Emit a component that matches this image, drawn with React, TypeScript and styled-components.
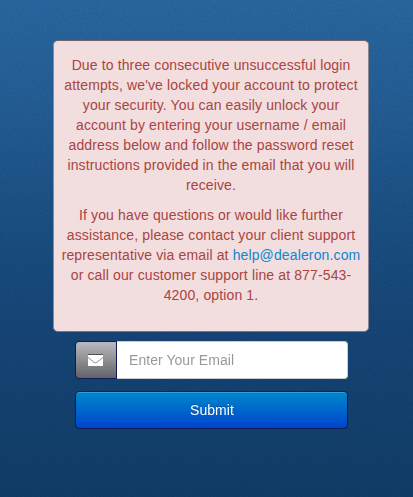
import React from "react";
import styled, { createGlobalStyle } from "styled-components";

const GlobalStyle = createGlobalStyle`
  * { box-sizing: border-box; }
  html, body { margin: 0; padding: 0; }
  body {
    font-family: "Liberation Sans", Arial, Helvetica, sans-serif;
    font-size: 14px;
    line-height: 20px;
  }
`;

const Page = styled.main`
  position: relative;
  isolation: isolate;
  display: flex;
  flex-direction: column;
  height: 497px;
  padding: 40px 44px 0 53px;
  overflow: hidden;
  background: linear-gradient(#27649b 0, #225a90 110px, #1a4e81 210px, #144272 340px, #103b64 497px);
`;

const Grain = styled.svg`
  position: absolute;
  inset: 0;
  z-index: -1;
  width: 100%;
  height: 100%;
  opacity: 0.09;
  mix-blend-mode: overlay;
`;

const Alert = styled.section`
  height: 292px;
  padding: 14px 5px 0;
  border: 1px solid;
  border-color: #6f6467 #8c8790 #77757f #8c8790;
  border-radius: 5px;
  background: #f2dede;
  color: #a94442;
  text-align: center;
  letter-spacing: 0.13px;
`;

const Paragraph = styled.p`
  margin: 0 0 10px;
`;

const MailLink = styled.a`
  color: #0e86d1;
  text-decoration: none;
`;

const Form = styled.form`
  display: flex;
  flex-direction: column;
  gap: 12px;
  width: 273px;
  margin: 9px 0 0 22px;
`;

const Field = styled.div`
  display: flex;
  height: 38px;
`;

const AddOn = styled.span`
  display: flex;
  align-items: center;
  justify-content: center;
  width: 42px;
  padding-right: 1px;
  border: 1px solid #111c55;
  border-radius: 4px 0 0 4px;
  background: linear-gradient(#b9b9be, #626268);
`;

const Input = styled.input`
  flex: 1;
  min-width: 0;
  padding: 0 12px;
  border: 1px solid #ccc;
  border-left: 0;
  border-radius: 0 4px 4px 0;
  outline: 0;
  background: #fff;
  font: inherit;
  letter-spacing: 0.05px;
  color: #555;
  &::placeholder { color: #999; opacity: 1; }
`;

const Submit = styled.button`
  height: 38px;
  padding: 0 0 0 1px;
  border: 1px solid #101c57;
  border-radius: 4px;
  background: linear-gradient(#0088cc, #0044cc);
  box-shadow: inset 0 1px 0 rgba(255, 255, 255, 0.2);
  color: #fff;
  font: inherit;
  letter-spacing: 0.08px;
  text-shadow: 0 -1px 0 rgba(0, 0, 0, 0.25);
`;

const Envelope = () => (
  <svg width="15" height="12" viewBox="0 0 15 12" aria-hidden="true">
    <path d="M0 0H15V1H0Z" fill="#505055" />
    <path d="M0 1H15V2.8L9 7.8Q7.5 9 6 7.8L0 2.8Z" fill="#fff" />
    <path d="M0 3.7L5.4 8.3Q7.5 10 9.6 8.3L15 3.7V12H0Z" fill="#fff" />
  </svg>
);

export default function App() {
  return (
    <>
      <GlobalStyle />
      <Page>
        <Grain aria-hidden="true">
          <filter id="grain" colorInterpolationFilters="sRGB">
            <feTurbulence type="fractalNoise" baseFrequency="0.6" numOctaves="2" />
            <feColorMatrix values="1 0 0 0 0 1 0 0 0 0 1 0 0 0 0 0 0 0 0 1" />
          </filter>
          <rect width="100%" height="100%" filter="url(#grain)" />
        </Grain>
        <Alert role="alert">
          <Paragraph>
            Due to three consecutive unsuccessful login attempts, we've locked your account to
            protect your security. You can easily unlock your account by entering your username /
            email address below and follow the password reset instructions provided in the email
            that you will receive.
          </Paragraph>
          <Paragraph>
            If you have questions or would like further assistance, please contact your client
            support representative via email at{" "}
            <MailLink href="mailto:help@dealeron.com">help@dealeron.com</MailLink> or call our
            customer support line at 877-543-4200, option 1.
          </Paragraph>
        </Alert>
        <Form onSubmit={(event) => event.preventDefault()}>
          <Field>
            <AddOn>
              <Envelope />
            </AddOn>
            <Input type="email" placeholder="Enter Your Email" aria-label="Email" />
          </Field>
          <Submit type="submit">Submit</Submit>
        </Form>
      </Page>
    </>
  );
}
